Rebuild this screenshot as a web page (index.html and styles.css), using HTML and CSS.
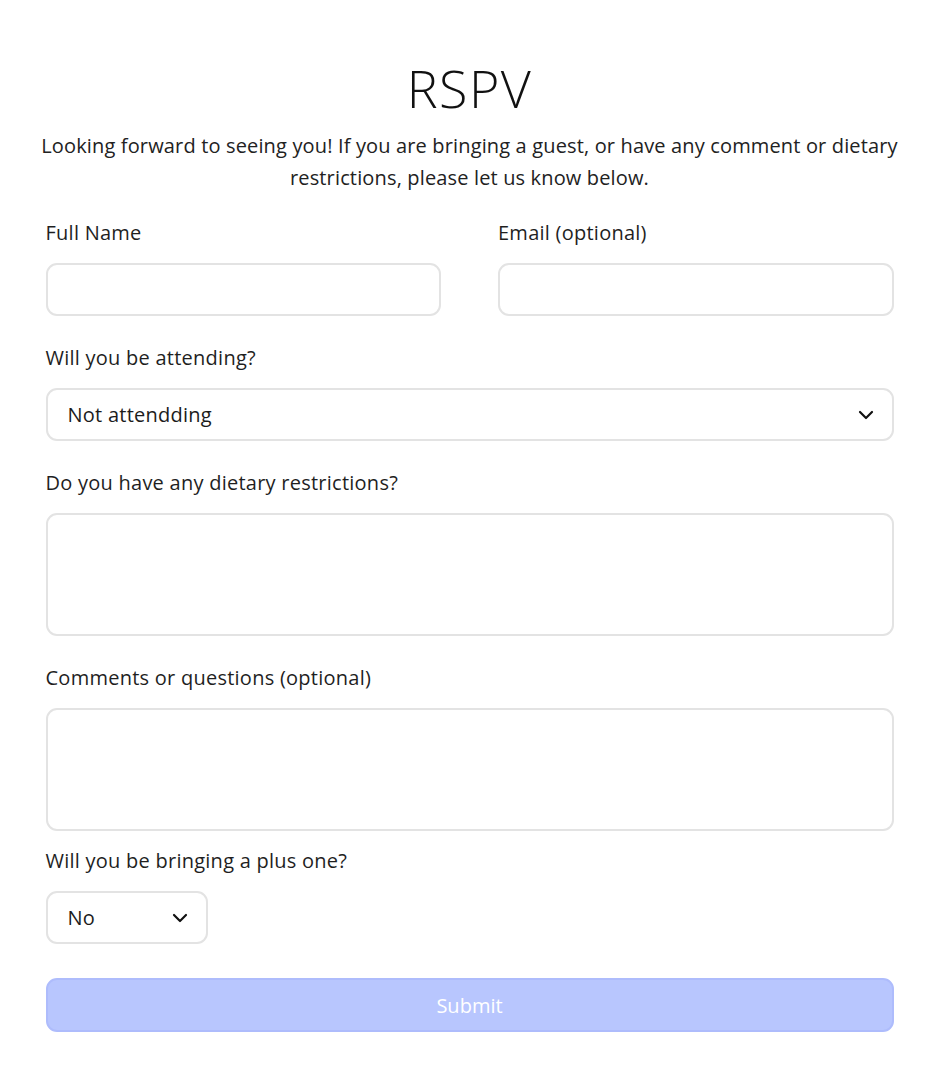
FILE: index.html
```html
<!DOCTYPE html>
<html lang="en">
<head>
    <meta charset="UTF-8">
    <meta name="viewport" content="width=device-width, initial-scale=1.0">
    <title>RSPV</title>
    <link rel="stylesheet" href="styles.css">
</head>
<body>

    <div class="rsvp">
        <h1>RSPV</h1>
        <p class="intro">Looking forward to seeing you! If you are bringing a guest, or have any comment or dietary restrictions, please let us know below.</p>

        <form class="rsvp-form" onsubmit="return false">
            <div class="row">
                <div class="field">
                    <label for="nombre">Full Name</label>
                    <input type="text" id="nombre">
                </div>
                <div class="field">
                    <label for="email">Email (optional)</label>
                    <input type="email" id="email">
                </div>
            </div>

            <div class="field">
                <label for="asiste">Will you be attending?</label>
                <div class="select-wrap">
                    <select id="asiste">
                        <option>Not attendding</option>
                        <option>Attending</option>
                    </select>
                    <svg class="chevron" width="16" height="10" viewBox="0 0 16 10"><path d="M2 2l6 6 6-6" fill="none" stroke="#111" stroke-width="2.2" stroke-linecap="round" stroke-linejoin="round"/></svg>
                </div>
            </div>

            <div class="field">
                <label for="dieta">Do you have any dietary restrictions?</label>
                <textarea id="dieta"></textarea>
            </div>

            <div class="field field-tight">
                <label for="comentarios">Comments or questions (optional)</label>
                <textarea id="comentarios"></textarea>
            </div>

            <div class="field">
                <label for="acompanante">Will you be bringing a plus one?</label>
                <div class="select-wrap select-small">
                    <select id="acompanante">
                        <option>No</option>
                        <option>Yes</option>
                    </select>
                    <svg class="chevron" width="16" height="10" viewBox="0 0 16 10"><path d="M2 2l6 6 6-6" fill="none" stroke="#111" stroke-width="2.2" stroke-linecap="round" stroke-linejoin="round"/></svg>
                </div>
            </div>

            <button type="submit" class="submit" disabled>Submit</button>
        </form>
    </div>

</body>
</html>
```

FILE: styles.css
```css
body {
    margin: 0;
    font-family: "Open Sans", "Noto Sans", sans-serif;
    color: #1c1c1c;
    background: #fff;
}

.rsvp {
    width: 872px;
    margin: 0 auto;
    padding-top: 56px;
}

.rsvp h1 {
    margin: 0;
    text-align: center;
    font-family: "Open Sans", sans-serif;
    font-weight: 300;
    font-size: 52px;
    line-height: 64px;
    letter-spacing: 1.5px;
    color: #111;
}

.intro {
    margin: 10px 0 0;
    text-align: center;
    font-size: 20px;
    line-height: 32px;
    letter-spacing: 0.15px;
    color: #222;
}

.rsvp-form {
    margin: 27px 12px 0;
}

.row {
    display: grid;
    grid-template-columns: 1fr 1fr;
    column-gap: 57px;
}

.field {
    margin-bottom: 30px;
}

.field-tight {
    margin-bottom: 18px;
}

.field label {
    display: block;
    margin-bottom: 18px;
    font-size: 20px;
    line-height: 24px;
    letter-spacing: 0.25px;
    color: #1f1f1f;
}

.field input,
.field textarea,
.field select {
    display: block;
    box-sizing: border-box;
    width: 100%;
    border: 2px solid #e3e3e3;
    border-radius: 11px;
    background: #fff;
    font-family: inherit;
    font-size: 20px;
    letter-spacing: 0.25px;
    color: #1c1c1c;
    outline: none;
}

.field input {
    height: 53px;
    padding: 0 20px;
}

.field textarea {
    height: 123px;
    padding: 14px 20px;
    resize: none;
}

.select-wrap {
    position: relative;
}

.field select {
    height: 53px;
    padding: 0 20px;
    appearance: none;
    -webkit-appearance: none;
}

.select-small {
    width: 162px;
}

.chevron {
    position: absolute;
    right: 20px;
    top: 22px;
    pointer-events: none;
}

/* el margen se junta con el del campo anterior */
.submit {
    display: block;
    width: 100%;
    height: 54px;
    margin-top: 34px;
    border: 2px solid #aebcfc;
    border-radius: 11px;
    background: #b8c6fe;
    color: #fff;
    font-family: inherit;
    font-size: 20px;
}
```
